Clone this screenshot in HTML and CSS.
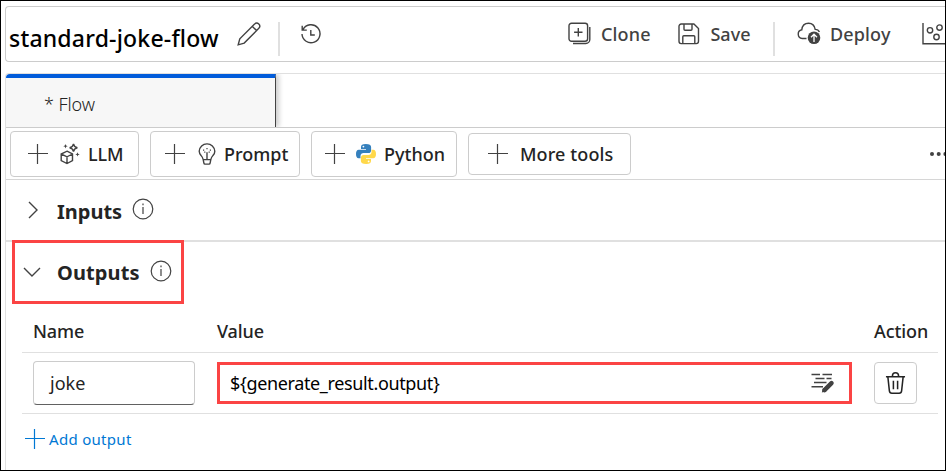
FILE: index.html
```html
<!DOCTYPE html>
<html lang="en">
<head>
<meta charset="utf-8">
<title>standard-joke-flow</title>
<link rel="stylesheet" href="styles.css">
</head>
<body>
<div class="window">
  <header class="header">
    <h1 class="title">standard-joke-flow</h1>
    <svg class="icon pencil" viewBox="0 0 24 24"><path d="M1.2 22.8 2.8 16.8 17.6 2.1a2.9 2.9 0 0 1 4.2 4.2L7.2 21.1ZM15.4 4.4l4.2 4.2"/></svg>
    <i class="divider"></i>
    <svg class="icon history" viewBox="0 0 20 20"><path d="M2.1 5.4A9 9 0 1 1 1 10M1.2 1.8v4.3h4.600M9.800 6v5h4"/></svg>
    <div class="commands">
      <button class="command clone">
        <svg class="icon" viewBox="0 0 24 24"><rect x="1" y="1.2" width="18.6" height="18" rx="2.5"/><path d="M10.3 6v8.4M6.1 10.2h8.4M21.8 5v12.500a4 4 0 0 1-4 4H5"/></svg>
        <span>Clone</span>
      </button>
      <button class="command save">
        <svg class="icon" viewBox="0 0 22 22"><path d="M3.2 1h12.700L20.500 5.500v12.800a2.300 2.300 0 0 1-2.300 2.300H3.200A2.300 2.300 0 0 1 1 18.300V3.200A2.200 2.200 0 0 1 3.200 1ZM6 1v5.200a1 1 0 0 0 1 1h6a1 1 0 0 0 1-1V1M4.800 20.500v-6.700a1 1 0 0 1 1-1h10a1 1 0 0 1 1 1v6.700"/></svg>
        <span>Save</span>
      </button>
      <i class="divider"></i>
      <button class="command deploy">
        <svg class="icon" viewBox="0 0 24 24"><path d="M9.500 16.500H5.200a4.400 4.400 0 0 1-.4-8.700C5.200 3.700 8 1.200 11.600 1.200s6 2.500 6.600 6.200c2 0 3.500 1 4.200 2.600"/><circle class="solid" cx="17" cy="15.800" r="6.300"/><path class="knockout" d="M17 20v-7.500M14 15.200l3-3 3 3"/></svg>
        <span>Deploy</span>
      </button>
      <svg class="icon chart" viewBox="0 0 24 22"><path d="M1 0v20.800h23"/><circle cx="8" cy="7.300" r="2.700"/><circle cx="17.500" cy="4.600" r="2.700"/><circle cx="14.500" cy="14" r="2.700"/></svg>
    </div>
  </header>

  <main class="panel">
    <div class="tabs"><div class="tab">* Flow</div></div>

    <div class="toolbar">
      <button class="tool llm">
        <svg class="icon plus" viewBox="0 0 20 20"><path d="M9.500 0v20M0 9.500h20"/></svg>
        <svg class="icon glyph" viewBox="0 0 20 22"><path d="M7 8.200 12.500 11v6.500L7 20.500l-5.800-3V11ZM1.200 11 7 13.800l5.500-2.800M7 13.800v6.700"/><path d="M13.500.8c.5 2.600 1.300 3.400 3.900 3.900-2.600.5-3.400 1.300-3.900 3.900-.5-2.600-1.300-3.400-3.900-3.900 2.600-.5 3.400-1.300 3.900-3.900Z"/><path class="solid" d="m5.500 1 .6 1.600 1.600.6-1.600.6-.6 1.600-.6-1.600-1.600-.6 1.600-.6ZM17.500 9.200l.6 1.600 1.600.6-1.600.6-.6 1.600-.6-1.600-1.600-.6 1.600-.6Z"/></svg>
        <span>LLM</span>
      </button>
      <button class="tool prompt">
        <svg class="icon plus" viewBox="0 0 20 20"><path d="M9.500 0v20M0 9.500h20"/></svg>
        <svg class="icon glyph" viewBox="0 0 18 22"><path d="M5.200 16.600c-.3-2.100-1.200-3-2.300-4.300A7.300 7.300 0 0 1 1.200 8.200 7.700 7.700 0 0 1 9 .9a7.700 7.700 0 0 1 7.800 7.300c0 1.800-.7 3-1.700 4.100-1.100 1.300-2 2.200-2.300 4.300ZM5.200 16.600l.7 3.500a1.200 1.200 0 0 0 1.100 1h4a1.200 1.200 0 0 0 1.100-1l.7-3.500M9 9.300v7"/><path class="solid" d="M8.400 5h1.200v1.200H8.400ZM5 6.500h1.200v1.200H5ZM11.800 6.500H13v1.200h-1.200ZM6.200 8.500h1.200v1.200H6.200ZM10.600 8.500h1.200v1.200h-1.200Z"/></svg>
        <span>Prompt</span>
      </button>
      <button class="tool python">
        <svg class="icon plus" viewBox="0 0 20 20"><path d="M9.500 0v20M0 9.500h20"/></svg>
        <svg class="glyph" viewBox="0 0 20 20"><path class="snake-blue" d="M9.800 0C6.300 0 5 1 5 3v2h5v.8H2.800C.8 5.800 0 7.600 0 10s.8 4.300 2.600 4.300h1.900v-2.200c0-1.800 1.400-3 3-3h4.900c1.600 0 2.700-1.200 2.700-2.700V3c0-2-1.700-3-5.300-3Z"/><path class="snake-yellow" d="M10.200 20c3.500 0 4.800-1 4.800-3v-2h-5v-.8h7.200c2 0 2.800-1.800 2.800-4.200s-.8-4.300-2.600-4.300h-1.900v2.200c0 1.800-1.400 3-3 3H7.600c-1.600 0-2.700 1.200-2.700 2.700V17c0 2 1.700 3 5.300 3Z"/><circle cx="7.400" cy="2.600" r=".9" fill="#fff"/><circle cx="12.600" cy="17.400" r=".9" fill="#fff"/></svg>
        <span>Python</span>
      </button>
      <button class="tool more">
        <svg class="icon plus" viewBox="0 0 20 20"><path d="M9.500 0v20M0 9.500h20"/></svg>
        <span>More tools</span>
      </button>
      <svg class="overflow" viewBox="0 0 18 4"><circle cx="2" cy="2" r="2"/><circle cx="8.700" cy="2" r="2"/><circle cx="15.400" cy="2" r="2"/></svg>
    </div>

    <section class="inputs">
      <svg class="icon chevron" viewBox="0 0 18 18"><path d="m5 1 8 8-8 8"/></svg>
      <h2>Inputs</h2>
      <svg class="icon info" viewBox="0 0 22 22"><circle cx="11" cy="11" r="9.800"/><path d="M11 9v7M11 5.500v1.700"/></svg>
    </section>

    <section class="outputs">
      <div class="outputs-head">
        <svg class="icon chevron" viewBox="0 0 18 18"><path d="m1 5 8 8 8-8"/></svg>
        <h2>Outputs</h2>
        <svg class="icon info" viewBox="0 0 22 22"><circle cx="11" cy="11" r="9.800"/><path d="M11 9v7M11 5.500v1.700"/></svg>
      </div>

      <div class="table">
        <div class="row head">
          <span class="h-name">Name</span><span class="h-value">Value</span><span class="h-action">Action</span>
        </div>
        <div class="row body">
          <div class="field"><span>joke</span></div>
          <div class="value">
            <span>${generate_result.output}</span>
            <svg class="icon edit" viewBox="0 0 24 20"><path d="M.5 1.500h8.500M11.500 1.500h9.500M4.500 5.500h9M15.500 5.500h5M3 9.500h12.500M.5 13.700H12"/><path class="pen" d="m13.500 17.200 7-7"/><path class="solid" d="m10.800 19.500 1.200-4.500 3.300 3.300Z"/></svg>
          </div>
          <button class="delete">
            <svg class="icon" viewBox="0 0 22 24"><path d="M1 5h20M7.800 5V4a3.200 3.200 0 0 1 6.400 0v1M3 5l1.600 14.800a2.600 2.600 0 0 0 2.600 2.300h7.600a2.600 2.600 0 0 0 2.600-2.300L19 5M8.800 9.200v8.800M13.200 9.200v8.800"/></svg>
          </button>
        </div>
      </div>

      <a class="add">
        <svg class="icon plus" viewBox="0 0 20 20"><path d="M9.500 0v20M0 9.500h20"/></svg>
        <span>Add output</span>
      </a>
    </section>
  </main>
</div>
</body>
</html>
```

FILE: styles.css
```css
* { box-sizing: border-box; }

body {
  margin: 0;
  font-family: "Noto Sans", "Open Sans", sans-serif;
  font-size: 18px;
  color: #242424;
  background: #fff;
}

button { font: inherit; color: inherit; background: #fff; border: 0; padding: 0; margin: 0; }
h1, h2 { margin: 0; }
span, h1, h2 { white-space: nowrap; }
svg { display: block; flex: none; overflow: visible; }

.icon { fill: none; stroke: #424242; stroke-width: 1.4; }
.icon .solid { fill: #424242; stroke: none; }
.icon .knockout { stroke: #fff; stroke-width: 1.3; }

.window {
  width: 946px;
  height: 471px;
  border: 1px solid #000;
  overflow: hidden;
  padding: 5px 0 0 4px;
  display: flex;
  flex-direction: column;
}

.header {
  display: flex;
  align-items: center;
  height: 56px;
  flex: none;
  border: 1px solid #ccc;
  border-right: 0;
  border-radius: 4px 0 0 4px;
  padding-left: 3px;
}
.title { width: 210px; font-size: 23px; font-weight: 500; color: #000; letter-spacing: .2px; padding-top: 7px; }
.pencil { width: 24px; height: 24px; margin-left: 18px; }
.divider { width: 2px; height: 34px; background: #e0e0e0; margin-top: 10px; }
.header > .divider { margin-left: 17px; }
.history { width: 20px; height: 20px; margin-left: 21px; }
.commands { display: flex; align-items: center; margin-left: auto; width: 377px; color: #424242; font-weight: 500; }
.command { display: flex; align-items: center; }
.clone { width: 112px; letter-spacing: .15px; }
.save { width: 95px; letter-spacing: .1px; }
.clone svg, .deploy svg { width: 24px; height: 24px; margin-right: 9px; }
.save svg { width: 22px; height: 22px; margin-right: 10px; }
.commands .divider { flex: none; margin-left: 0; }
.deploy { margin-left: 22px; width: 125px; flex: none; letter-spacing: .15px; }
.deploy, .chart, .commands .divider { transform: translateX(1px); }
.chart { width: 24px; height: 22px; }

.panel { flex: 1; margin-top: 11px; border: solid #e0e0e0; border-width: 1px 0 0 1px; border-radius: 4px 0 0 0; }

.tabs { height: 54px; border-bottom: 1px solid #ccc; }
.tab {
  width: 270px;
  height: 53px;
  padding: 0 0 0 38px;
  line-height: 53px;
  font-weight: 350;
  letter-spacing: -.1px;
  border-top: 4px solid #015cda;
  border-right: 1px solid #424242;
  border-radius: 4px 0 0 0;
  background: #f7f7f7;
  box-shadow: 3px 0 5px rgba(0, 0, 0, .2);
  clip-path: inset(0 -10px 0 0);
}

.toolbar { display: flex; align-items: center; height: 52px; border-bottom: 1px solid #d6d6d6; padding-left: 4px; font-weight: 500; }
.tool { display: flex; align-items: center; height: 46px; border: 1px solid #ccc; border-radius: 4px; flex: none; }
.tool span { letter-spacing: 0; }
.plus { width: 20px; height: 20px; stroke-width: 1.2; }
.tool .plus { margin-left: 17px; }
.llm { width: 129px; margin-right: 11px; }
.llm .glyph { width: 20px; height: 22px; margin: 0 8px 0 12px; }
.llm span { letter-spacing: -.15px; }
.prompt { width: 150px; margin-right: 11px; }
.prompt .plus { margin-left: 14px; }
.prompt .glyph { width: 18px; height: 22px; margin: 0 8px 0 13px; }
.python { width: 146px; margin-right: 11px; }
.python .plus { margin-left: 13px; }
.python .glyph { width: 20px; height: 20px; margin: 0 8px 0 11px; }
.snake-blue { fill: #3580bd; }
.snake-yellow { fill: #ffd84a; }
.more { width: 163px; height: 42px; }
.more .plus { margin-left: 19px; margin-right: 12px; }
.more span { letter-spacing: .1px; }
.overflow { width: 18px; height: 4px; margin: 0 -3px 0 auto; fill: #424242; }

h2 { font-size: 20px; font-weight: 700; }
.inputs { display: flex; align-items: center; height: 62px; padding-left: 18px; border-bottom: 2px solid #e0e0e0; }
.inputs h2 { margin-left: 15px; width: 75px; padding-top: 2px; }
.chevron { width: 18px; height: 18px; }
.info { width: 22px; height: 22px; stroke-width: 1.2; }
.inputs .info, .outputs-head .info { margin-bottom: 2px; }

.outputs-head {
  display: flex;
  align-items: center;
  width: 172px;
  height: 64px;
  margin: -2px 0 0 6px;
  position: relative;
  border: 3px solid #fb4444;
  padding-left: 8px;
}
.outputs-head h2 { margin-left: 16px; width: 93px; letter-spacing: .1px; }

.table { margin: 9px 7px 0 16px; }
.row { display: flex; align-items: center; border-bottom: 1px solid #e0e0e0; padding-left: 11px; }
.head { height: 40px; font-weight: 500; padding-bottom: 4px; }
.head span { letter-spacing: -.1px; }
.h-name { width: 184px; }
.h-value { flex: 1; }
.h-action { width: 64px; }
.body { height: 61px; }
.field { display: flex; align-items: center; width: 162px; height: 44px; border: 1px solid #ccc; border-bottom-color: #616161; border-radius: 4px; padding-left: 16px; }
.value { display: flex; align-items: center; justify-content: space-between; width: 635px; height: 42px; margin-left: 22px; border: 3px solid #fb4444; padding: 0 14px 0 10px; color: #000; letter-spacing: -.36px; }
.edit { width: 24px; height: 20px; }
.edit .pen { stroke-width: 4.500; stroke-linecap: round; }
.delete { display: flex; align-items: center; justify-content: center; width: 43px; height: 42px; margin-left: 22px; border: 1px solid #ccc; border-radius: 4px; }
.delete svg { width: 21px; height: 23px; stroke: #242424; stroke-width: 1.6; }

.add { display: flex; align-items: center; margin-left: 19px; height: 50px; color: #0078d4; font-size: 15px; letter-spacing: .3px; }
.add .plus { stroke: #0078d4; margin-right: 4px; }
```
